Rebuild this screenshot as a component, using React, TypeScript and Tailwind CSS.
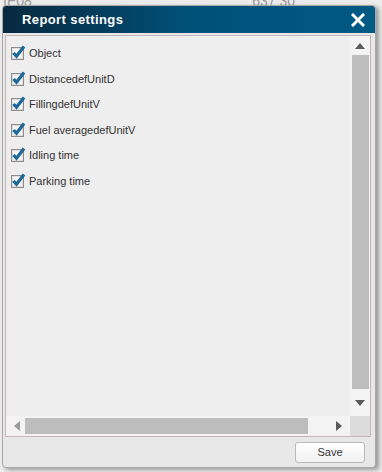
const items = [
  "Object",
  "DistancedefUnitD",
  "FillingdefUnitV",
  "Fuel averagedefUnitV",
  "Idling time",
  "Parking time",
];

const font = { fontFamily: "'Liberation Sans', Arial, sans-serif" };

function CheckIcon() {
  return (
    <svg width="16" height="16" viewBox="0 0 16 16" className="shrink-0">
      <rect x="1.5" y="3.5" width="12" height="12" fill="#f6f6f6" stroke="#8e8e8e" />
      <rect x="2.5" y="4.5" width="10" height="10" fill="none" stroke="#dcdcdc" />
      <path d="M3.5 9 L6.5 12.2 L14 2.5" fill="none" stroke="#1b6899" strokeWidth="3.2" strokeLinejoin="miter" />
    </svg>
  );
}

function Arrow({ dir }: { dir: "up" | "down" | "left" | "right" }) {
  const d = {
    up: "M0 6 L5 0 L10 6 Z",
    down: "M0 0 L10 0 L5 6 Z",
    left: "M6 0 L6 10 L0 5 Z",
    right: "M0 0 L6 5 L0 10 Z",
  }[dir];
  const vert = dir === "up" || dir === "down";
  return (
    <svg width={vert ? 10 : 6} height={vert ? 6 : 10} viewBox={vert ? "0 0 10 6" : "0 0 6 10"}>
      <path d={d} fill={dir === "left" ? "#9a9a9a" : "#5a5a5a"} />
    </svg>
  );
}

export default function App() {
  return (
    <div className="relative w-[382px] h-[472px] overflow-hidden bg-[#ececec]" style={font}>
      {/* page behind the dialog */}
      <div className="flex justify-between px-[3px] -mt-[9px] text-[14px] text-[#9a9a9a]">
        <span>IE08</span>
        <span className="mr-[84px]">637 30</span>
      </div>

      <div className="absolute left-[2px] top-[5px] w-[374px] h-[463px] flex flex-col rounded-[4px] border border-[#a9a9a9] bg-[#e8e8e8] shadow-[3px_2px_4px_rgba(0,0,0,0.35)] overflow-hidden">
        <div className="h-[27px] shrink-0 flex items-center justify-between pl-[19px] pr-[10px] bg-gradient-to-r from-[#062a40] via-[#005079] to-[#005a84]">
          <span className="text-white font-bold text-[13px] tracking-[0.4px]">Report settings</span>
          <svg width="14" height="14" viewBox="0 0 14 14">
            <path d="M2 2 L12 12 M12 2 L2 12" stroke="#fff" strokeWidth="3" strokeLinecap="square" />
          </svg>
        </div>

        <div className="mt-[2px] ml-[2px] w-[366px] h-[402px] border border-[#c6b5b7] grid grid-cols-[1fr_20px] grid-rows-[1fr_20px]">
          <div className="bg-[#eeeeee] flex flex-col gap-[9.5px] pt-[8px] pl-[4px]">
            {items.map((t) => (
              <div key={t} className="flex items-center gap-[3px] h-[16px] text-[11px] text-[#333]">
                <CheckIcon />
                <span className="mt-[3px]">{t}</span>
              </div>
            ))}
          </div>
          <div className="bg-[#f3f3f3] flex flex-col items-center pt-[7px] pb-[10px]">
            <Arrow dir="up" />
            <div className="w-[17px] flex-1 mt-[6px] mb-[11px] bg-[#bdbdbd]" />
            <Arrow dir="down" />
          </div>
          <div className="bg-[#f3f3f3] flex items-center pl-[8px] pr-[8px]">
            <Arrow dir="left" />
            <div className="h-[16px] w-[283px] ml-[5px] bg-[#bdbdbd]" />
            <div className="flex-1" />
            <Arrow dir="right" />
          </div>
          <div className="bg-[#dcdcdc]" />
        </div>

        <div className="flex justify-end pr-[10px] mt-[5px]">
          <button className="w-[70px] h-[21px] rounded-[3px] border border-[#b9b9b9] bg-gradient-to-b from-white to-[#f1f1f1] text-[11px] text-[#333]">
            Save
          </button>
        </div>
      </div>
    </div>
  );
}
